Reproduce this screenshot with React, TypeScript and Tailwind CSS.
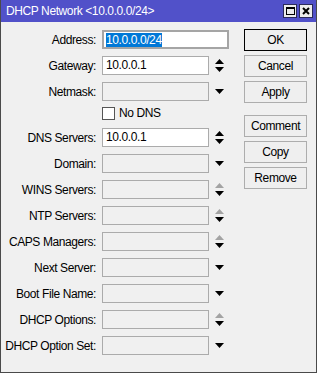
import React from "react";

type Arrow = "spin" | "spinOff" | "down" | "none";

interface Field {
  label: string;
  value?: string;
  arrow: Arrow;
  enabled?: boolean;
}

const fields: Field[] = [
  { label: "DNS Servers:", value: "10.0.0.1", arrow: "spin", enabled: true },
  { label: "Domain:", arrow: "down" },
  { label: "WINS Servers:", arrow: "spinOff" },
  { label: "NTP Servers:", arrow: "spinOff" },
  { label: "CAPS Managers:", arrow: "spinOff" },
  { label: "Next Server:", arrow: "down" },
  { label: "Boot File Name:", arrow: "down" },
  { label: "DHCP Options:", arrow: "spinOff" },
  { label: "DHCP Option Set:", arrow: "down" },
];

function ArrowIcon({ kind }: { kind: Arrow }) {
  if (kind === "none") return null;
  if (kind === "down") {
    return (
      <svg width="9" height="5" viewBox="0 0 9 5">
        <polygon points="0,0 9,0 4.5,5" fill="#000" />
      </svg>
    );
  }
  return (
    <svg width="9" height="13" viewBox="0 0 9 13">
      <polygon points="0,5 4.5,0 9,5" fill={kind === "spin" ? "#000" : "#a3a3a3"} />
      <polygon points="0,8 9,8 4.5,13" fill="#000" />
    </svg>
  );
}

function Row({ field }: { field: Field }) {
  return (
    <div className="flex items-center h-[19px] mb-[7px]">
      <div className="w-[95px] text-right whitespace-nowrap">{field.label}</div>
      <div
        className={
          "ml-[6px] w-[107px] h-[19px] border border-[#ababab] pl-[3px] leading-[17px] " +
          (field.enabled ? "bg-white" : "bg-[#f0f0f0]")
        }
      >
        {field.value}
      </div>
      <div className="ml-[6px] w-[9px] flex justify-center">
        <ArrowIcon kind={field.arrow} />
      </div>
    </div>
  );
}

const buttons = ["OK", "Cancel", "Apply", "Comment", "Copy", "Remove"];

export default function App() {
  return (
    <div
      className="w-[321px] h-[375px] bg-white text-[12px] tracking-[-0.4px] text-black"
      style={{ fontFamily: '"Liberation Sans", Arial, sans-serif' }}
    >
      <div className="w-[317px] h-[373px] flex flex-col border-x border-b border-[#4a4a4a]">
        {/* barra de titulo */}
        <div className="h-[22px] bg-[#5151c9] flex items-center pl-[5px] pr-[3px] text-white text-[12px]">
          <span>DHCP Network &lt;10.0.0.0/24&gt;</span>
          <div className="ml-auto flex gap-[2px]">
            <div className="w-[14px] h-[14px] bg-[#ececec] border border-[#2b2b5a] flex items-center justify-center">
              <div className="w-[9px] h-[8px] border border-black border-t-2" />
            </div>
            <div className="w-[14px] h-[14px] bg-[#ececec] border border-[#2b2b5a] flex items-center justify-center">
              <svg width="8" height="8" viewBox="0 0 8 8">
                <path d="M1 1 L7 7 M7 1 L1 7" stroke="#000" strokeWidth="2" />
              </svg>
            </div>
          </div>
        </div>

        <div className="flex-1 bg-[#f0f0f0] flex">
          {/* formulario */}
          <div className="w-[243px] pt-[8px]">
            <div className="flex items-center h-[19px] mb-[7px]">
              <div className="w-[95px] text-right">Address:</div>
              <div className="ml-[6px] w-[127px] h-[19px] border-2 border-[#a5a5a5] bg-white pl-[2px] flex items-center">
                <span className="bg-[#0078d7] text-white leading-[14px]">10.0.0.0/24</span>
              </div>
            </div>
            <Row field={{ label: "Gateway:", value: "10.0.0.1", arrow: "spin", enabled: true }} />
            <div className="flex items-center h-[19px] mb-[4px]">
              <div className="w-[95px] text-right">Netmask:</div>
              <div className="ml-[6px] w-[107px] h-[19px] border border-[#ababab] bg-[#f0f0f0]" />
              <div className="ml-[6px] w-[9px] flex justify-center">
                <ArrowIcon kind="down" />
              </div>
            </div>
            <div className="flex items-center h-[16px] mb-[7px] pl-[101px]">
              <div className="w-[13px] h-[13px] border border-[#555] bg-white" />
              <span className="ml-[4px]">No DNS</span>
            </div>
            {fields.map((f) => (
              <Row key={f.label} field={f} />
            ))}
          </div>

          {/* botones */}
          <div className="w-[63px] pt-[7px] flex flex-col">
            {buttons.map((b, i) => (
              <div
                key={b}
                className={
                  "h-[22px] flex items-center justify-center bg-[#efefef] border " +
                  (i === 0 ? "border-black" : "border-[#adadad]") +
                  (i === 0 ? "" : i === 3 ? " mt-[12px]" : " mt-[4px]")
                }
              >
                {b}
              </div>
            ))}
          </div>
        </div>
      </div>
    </div>
  );
}
